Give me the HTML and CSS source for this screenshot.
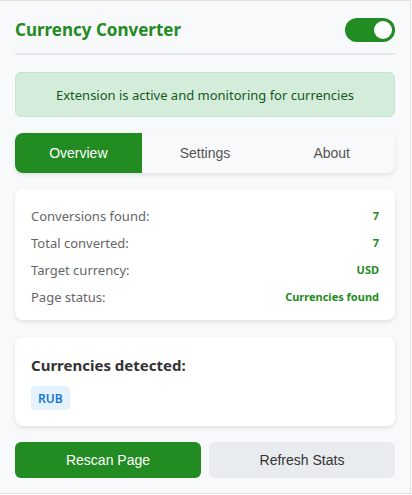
FILE: index.html
```html
<!DOCTYPE html>
<html>
<head>
<meta charset="utf-8">
<link rel="stylesheet" href="styles.css">
</head>
<body>
<div class="popup">
  <header class="header">
    <h1 class="title">Currency Converter</h1>
    <div class="toggle"><span class="knob"></span></div>
  </header>
  <div class="status">Extension is active and monitoring for currencies</div>
  <nav class="tabs">
    <div class="tab active">Overview</div>
    <div class="tab">Settings</div>
    <div class="tab">About</div>
  </nav>
  <section class="card stats">
    <div class="row"><span class="label">Conversions found:</span><span class="value">7</span></div>
    <div class="row"><span class="label">Total converted:</span><span class="value">7</span></div>
    <div class="row"><span class="label">Target currency:</span><span class="value">USD</span></div>
    <div class="row"><span class="label">Page status:</span><span class="value">Currencies found</span></div>
  </section>
  <section class="card detected">
    <h2 class="detected-title">Currencies detected:</h2>
    <div class="badges"><span class="badge">RUB</span></div>
  </section>
  <div class="actions">
    <button class="btn primary">Rescan Page</button>
    <button class="btn secondary">Refresh Stats</button>
  </div>
</div>
</body>
</html>
```
FILE: styles.css
```css
html, body {
  margin: 0;
  padding: 0;
  background: #ffffff;
}
.popup {
  box-sizing: border-box;
  width: 411px;
  height: 494px;
  background: #f8f9fa;
  border-top: 1px solid #e3e5e8;
  border-right: 1px solid #dfe1e4;
  border-bottom: 1px solid #dfe1e4;
  padding: 14px 15px 0 15px;
  font-family: "Noto Sans", sans-serif;
}
.header {
  display: flex;
  justify-content: space-between;
  align-items: center;
  height: 30px;
  padding-bottom: 8px;
  border-bottom: 2px solid #e5e7ea;
}
.title {
  margin: 0;
  font-size: 17px;
  font-weight: 700;
  color: #228b22;
  line-height: 24px;
}
.toggle {
  width: 50px;
  height: 24px;
  border-radius: 12px;
  background: #228b22;
  display: flex;
  align-items: center;
  justify-content: flex-end;
  padding: 0 3px;
  box-sizing: border-box;
}
.knob {
  width: 18px;
  height: 18px;
  border-radius: 50%;
  background: #fff;
}
.status {
  margin-top: 17px;
  height: 45px;
  box-sizing: border-box;
  background: #d4edda;
  border: 1px solid #c3e6cb;
  border-radius: 6px;
  color: #155724;
  font-size: 13px;
  display: flex;
  align-items: center;
  justify-content: center;
}
.tabs {
  margin-top: 16px;
  display: flex;
  height: 40px;
  border-radius: 8px;
  overflow: hidden;
  background: #f8f9fa;
  box-shadow: 0 2px 4px rgba(0,0,0,0.1);
}
.tab {
  flex: 1;
  display: flex;
  align-items: center;
  justify-content: center;
  font-family: "Liberation Sans", Arial, sans-serif;
  font-size: 14px;
  color: #555;
}
.tab.active {
  background: #228b22;
  color: #fff;
}
.card {
  background: #fff;
  border-radius: 8px;
  box-shadow: 0 2px 4px rgba(0,0,0,0.1);
}
.stats {
  margin-top: 16px;
  padding: 17px 16px 14px;
  display: flex;
  flex-direction: column;
  gap: 8px;
}
.row {
  display: flex;
  justify-content: space-between;
  align-items: center;
  height: 19px;
}
.label {
  font-size: 13px;
  color: #666;
}
.value {
  font-size: 11px;
  font-weight: 700;
  color: #228b22;
}
.detected {
  margin-top: 17px;
  padding: 16px;
}
.detected-title {
  margin: 0;
  font-size: 15px;
  font-weight: 700;
  color: #333;
  line-height: 24px;
}
.badges {
  margin-top: 9px;
  display: flex;
}
.badge {
  height: 24px;
  padding: 0 7px;
  display: flex;
  align-items: center;
  background: #e3f2fd;
  color: #1976d2;
  border-radius: 4px;
  font-size: 12px;
  font-weight: 600;
}
.actions {
  margin-top: 16px;
  display: flex;
  gap: 8px;
}
.btn {
  flex: 1;
  height: 36px;
  border: none;
  border-radius: 6px;
  font-family: "Liberation Sans", Arial, sans-serif;
  font-size: 14px;
  cursor: pointer;
}
.primary {
  background: #228b22;
  color: #fff;
}
.secondary {
  background: #e9ecef;
  color: #333;
}
```
